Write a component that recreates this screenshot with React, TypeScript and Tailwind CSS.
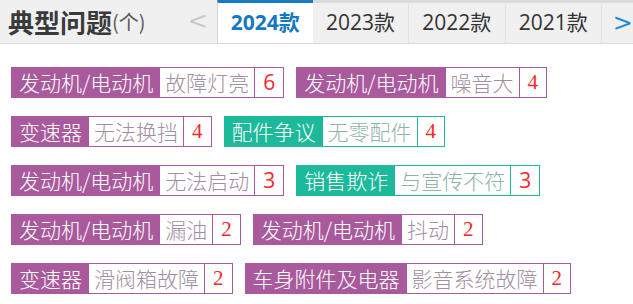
import React from "react";

type Tag = { cat: string; sub: string; n: string; teal?: boolean; serif?: boolean };

const tags: Tag[] = [
  { cat: "发动机/电动机", sub: "故障灯亮", n: "6" },
  { cat: "发动机/电动机", sub: "噪音大", n: "4", serif: true },
  { cat: "变速器", sub: "无法换挡", n: "4", serif: true },
  { cat: "配件争议", sub: "无零配件", n: "4", teal: true, serif: true },
  { cat: "发动机/电动机", sub: "无法启动", n: "3" },
  { cat: "销售欺诈", sub: "与宣传不符", n: "3", teal: true },
  { cat: "发动机/电动机", sub: "漏油", n: "2", serif: true },
  { cat: "发动机/电动机", sub: "抖动", n: "2", serif: true },
  { cat: "变速器", sub: "滑阀箱故障", n: "2", serif: true },
  { cat: "车身附件及电器", sub: "影音系统故障", n: "2", serif: true },
];

const cjk = { fontFamily: '"Noto Sans CJK SC", "Noto Sans", sans-serif' };
const ui = { fontFamily: '"Open Sans", "Noto Sans CJK SC", sans-serif' };

function TagItem({ t }: { t: Tag }) {
  return (
    <div
      className={
        "flex h-[31px] border bg-white text-[21px] leading-[29px] " +
        (t.teal ? "border-[#1cb99a]" : "border-[#a95a9d]")
      }
      style={cjk}
    >
      <span className={"px-[7px] font-light text-white " + (t.teal ? "bg-[#1cb99a]" : "bg-[#a95a9d]")}>
        {t.cat}
      </span>
      <span
        className={
          "border-r px-[5px] font-light " +
          (t.teal ? "border-[#1cb99a] text-[#8fb3a9]" : "border-[#a95a9d] text-[#a08fa0]")
        }
      >
        {t.sub}
      </span>
      <span
        className="px-[8px] text-[#f22a2a]"
        style={{ fontFamily: t.serif ? '"Liberation Serif", serif' : '"Open Sans", sans-serif' }}
      >
        {t.n}
      </span>
    </div>
  );
}

export default function App() {
  const years = ["2023款", "2022款", "2021款"];
  return (
    <div className="h-[304px] w-[633px] overflow-hidden bg-white">
      <div className="flex h-[44px] border-b border-[#d9d9d9] bg-[#f0f0f0]">
        <div className="flex w-[180px] items-center pl-[8px]" style={cjk}>
          <span className="text-[26px] font-bold leading-none text-[#3a3a3a]">典型问题</span>
          <span className="text-[20px] leading-none text-[#5a5a5a]">(个)</span>
        </div>
        <div
          className="flex w-[38px] items-center justify-center pb-[2px] text-[24px] text-[#c8c8c8]"
          style={{ fontFamily: '"DejaVu Sans", sans-serif' }}
        >
          &lt;
        </div>
        <div
          className="flex w-[97px] items-center justify-center border-l border-t-[3px] border-l-[#d4d4d4] border-t-[#1578c2] bg-white text-[21px] font-bold text-[#1578c2]"
          style={ui}
        >
          2024款
        </div>
        {years.map((y) => (
          <div
            key={y}
            className="flex w-[97px] items-center justify-center border-r border-t-[3px] border-r-[#e2e2e2] border-t-[#dadada] text-[21px] text-[#333]"
            style={ui}
          >
            {y}
          </div>
        ))}
        <div
          className="flex flex-1 items-center border-t-[3px] border-t-[#dadada] pl-[11px] text-[24px] text-[#2a86d6]"
          style={{ fontFamily: '"DejaVu Sans", sans-serif' }}
        >
          &gt;
        </div>
      </div>
      <div className="flex flex-wrap gap-x-[12px] gap-y-[18px] pl-[11px] pr-[2px] pt-[23px]">
        {tags.map((t, i) => (
          <TagItem key={i} t={t} />
        ))}
      </div>
    </div>
  );
}
